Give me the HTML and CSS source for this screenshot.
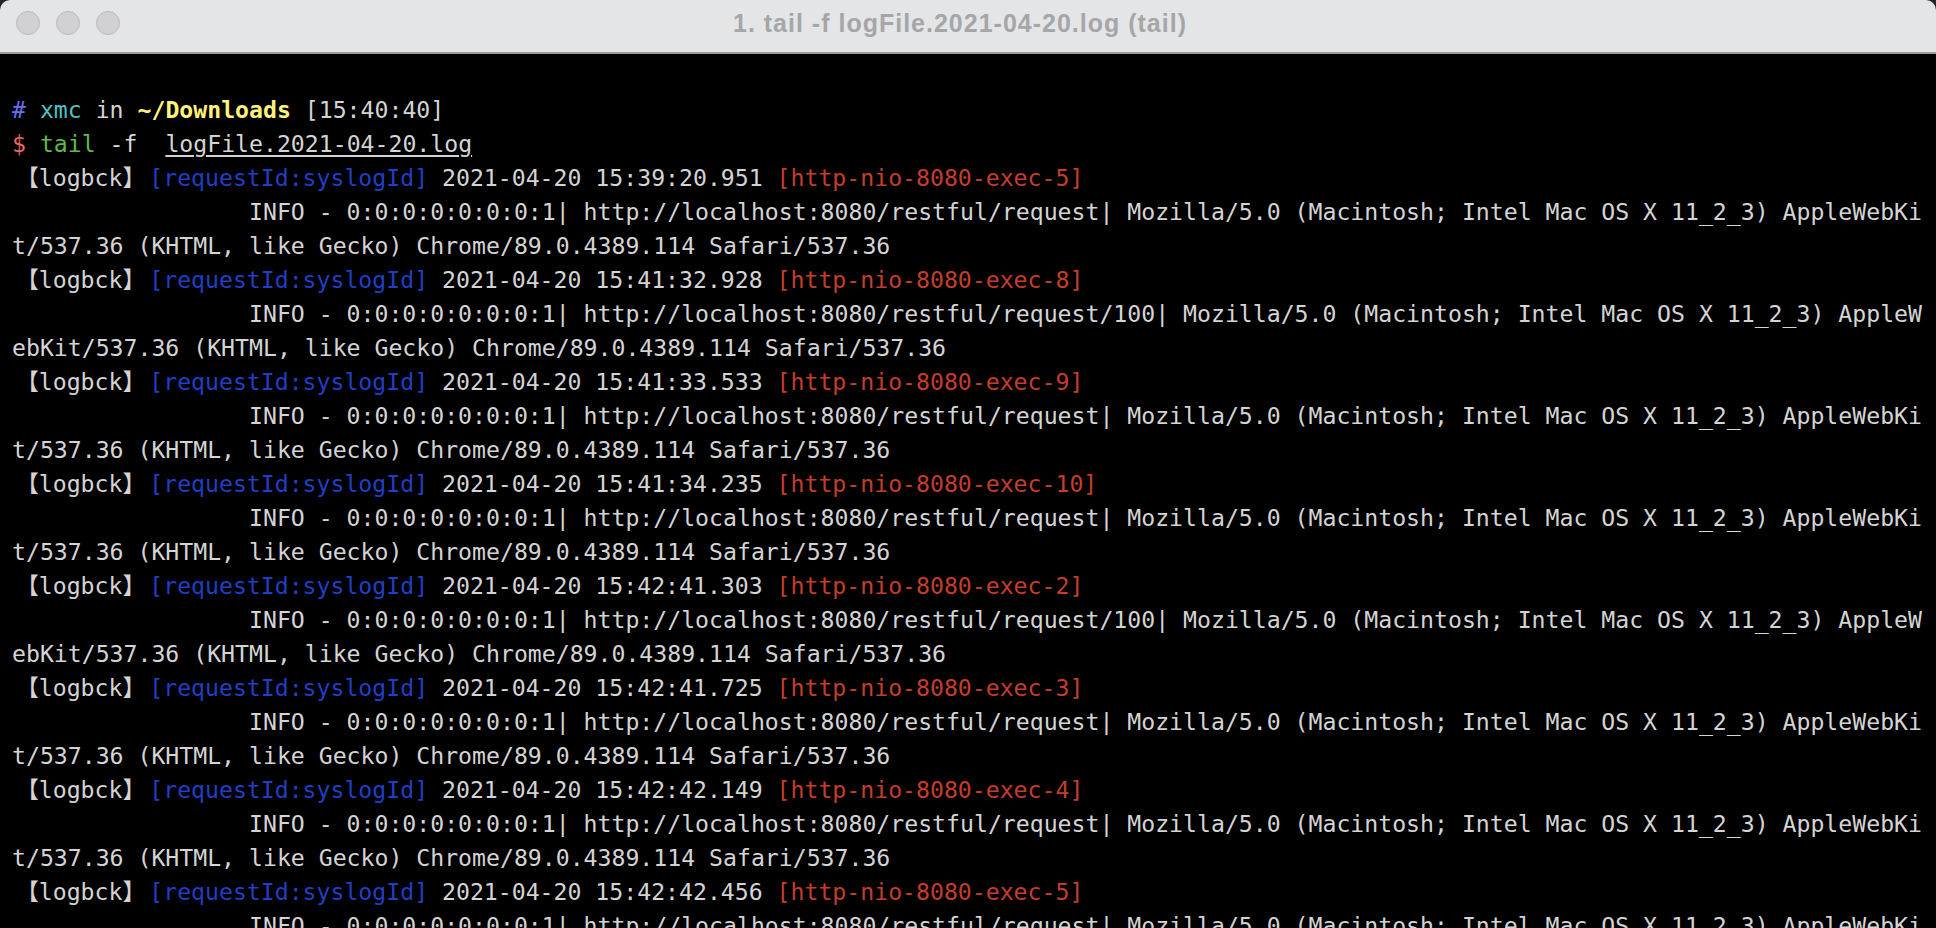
FILE: index.html
```html
<!DOCTYPE html>
<html lang="en">
<head>
<meta charset="utf-8">
<title>1. tail -f logFile.2021-04-20.log (tail)</title>
<link rel="stylesheet" href="styles.css">
</head>
<body>
<div class="window">
  <header class="titlebar">
    <div class="lights">
      <span class="light"></span>
      <span class="light"></span>
      <span class="light"></span>
    </div>
    <div class="title">1. tail -f logFile.2021-04-20.log (tail)</div>
    <div class="spacer"></div>
  </header>
  <main class="term">
    <div class="ln"> </div>
    <div class="ln"><span class="c-hash">#</span> <span class="c-user">xmc</span> in <span class="c-dir">~/Downloads</span> [15:40:40]</div>
    <div class="ln"><span class="c-dollar">$</span> <span class="c-cmd">tail</span> -f  <span class="c-file">logFile.2021-04-20.log</span></div>

    <div class="ln"> <span class="lb-open">【</span>logbck<span class="lb-close">】</span> <span class="c-req">[requestId:syslogId]</span> 2021-04-20 15:39:20.951 <span class="c-thr">[http-nio-8080-exec-5]</span></div>
    <div class="ln">                 INFO - 0:0:0:0:0:0:0:1| http://localhost:8080/restful/request| Mozilla/5.0 (Macintosh; Intel Mac OS X 11_2_3) AppleWebKi</div>
    <div class="ln">t/537.36 (KHTML, like Gecko) Chrome/89.0.4389.114 Safari/537.36</div>

    <div class="ln"> <span class="lb-open">【</span>logbck<span class="lb-close">】</span> <span class="c-req">[requestId:syslogId]</span> 2021-04-20 15:41:32.928 <span class="c-thr">[http-nio-8080-exec-8]</span></div>
    <div class="ln">                 INFO - 0:0:0:0:0:0:0:1| http://localhost:8080/restful/request/100| Mozilla/5.0 (Macintosh; Intel Mac OS X 11_2_3) AppleW</div>
    <div class="ln">ebKit/537.36 (KHTML, like Gecko) Chrome/89.0.4389.114 Safari/537.36</div>

    <div class="ln"> <span class="lb-open">【</span>logbck<span class="lb-close">】</span> <span class="c-req">[requestId:syslogId]</span> 2021-04-20 15:41:33.533 <span class="c-thr">[http-nio-8080-exec-9]</span></div>
    <div class="ln">                 INFO - 0:0:0:0:0:0:0:1| http://localhost:8080/restful/request| Mozilla/5.0 (Macintosh; Intel Mac OS X 11_2_3) AppleWebKi</div>
    <div class="ln">t/537.36 (KHTML, like Gecko) Chrome/89.0.4389.114 Safari/537.36</div>

    <div class="ln"> <span class="lb-open">【</span>logbck<span class="lb-close">】</span> <span class="c-req">[requestId:syslogId]</span> 2021-04-20 15:41:34.235 <span class="c-thr">[http-nio-8080-exec-10]</span></div>
    <div class="ln">                 INFO - 0:0:0:0:0:0:0:1| http://localhost:8080/restful/request| Mozilla/5.0 (Macintosh; Intel Mac OS X 11_2_3) AppleWebKi</div>
    <div class="ln">t/537.36 (KHTML, like Gecko) Chrome/89.0.4389.114 Safari/537.36</div>

    <div class="ln"> <span class="lb-open">【</span>logbck<span class="lb-close">】</span> <span class="c-req">[requestId:syslogId]</span> 2021-04-20 15:42:41.303 <span class="c-thr">[http-nio-8080-exec-2]</span></div>
    <div class="ln">                 INFO - 0:0:0:0:0:0:0:1| http://localhost:8080/restful/request/100| Mozilla/5.0 (Macintosh; Intel Mac OS X 11_2_3) AppleW</div>
    <div class="ln">ebKit/537.36 (KHTML, like Gecko) Chrome/89.0.4389.114 Safari/537.36</div>

    <div class="ln"> <span class="lb-open">【</span>logbck<span class="lb-close">】</span> <span class="c-req">[requestId:syslogId]</span> 2021-04-20 15:42:41.725 <span class="c-thr">[http-nio-8080-exec-3]</span></div>
    <div class="ln">                 INFO - 0:0:0:0:0:0:0:1| http://localhost:8080/restful/request| Mozilla/5.0 (Macintosh; Intel Mac OS X 11_2_3) AppleWebKi</div>
    <div class="ln">t/537.36 (KHTML, like Gecko) Chrome/89.0.4389.114 Safari/537.36</div>

    <div class="ln"> <span class="lb-open">【</span>logbck<span class="lb-close">】</span> <span class="c-req">[requestId:syslogId]</span> 2021-04-20 15:42:42.149 <span class="c-thr">[http-nio-8080-exec-4]</span></div>
    <div class="ln">                 INFO - 0:0:0:0:0:0:0:1| http://localhost:8080/restful/request| Mozilla/5.0 (Macintosh; Intel Mac OS X 11_2_3) AppleWebKi</div>
    <div class="ln">t/537.36 (KHTML, like Gecko) Chrome/89.0.4389.114 Safari/537.36</div>

    <div class="ln"> <span class="lb-open">【</span>logbck<span class="lb-close">】</span> <span class="c-req">[requestId:syslogId]</span> 2021-04-20 15:42:42.456 <span class="c-thr">[http-nio-8080-exec-5]</span></div>
    <div class="ln">                 INFO - 0:0:0:0:0:0:0:1| http://localhost:8080/restful/request| Mozilla/5.0 (Macintosh; Intel Mac OS X 11_2_3) AppleWebKi</div>
  </main>
</div>
</body>
</html>
```

FILE: styles.css
```css
html, body {
  margin: 0;
  padding: 0;
  height: 100%;
  overflow: hidden;
  background: #262626;
}

.window {
  height: 928px;
  display: flex;
  flex-direction: column;
  border-radius: 10px 10px 0 0;
  overflow: hidden;
  background: #000;
}

.titlebar {
  flex: 0 0 auto;
  height: 46px;
  padding-bottom: 6px;
  background: #e4e5e7;
  border-bottom: 2px solid #9c9c9c;
  display: grid;
  grid-template-columns: 1fr auto 1fr;
  align-items: center;
}

.lights {
  display: flex;
  gap: 16px;
  padding-left: 16px;
}

.light {
  width: 22px;
  height: 22px;
  border-radius: 50%;
  background: #d1d1d3;
  border: 1px solid #b9b9bb;
}

.title {
  font-family: "Liberation Sans", Arial, sans-serif;
  font-weight: bold;
  font-size: 25px;
  letter-spacing: 1px;
  color: #a6a6a8;
  white-space: nowrap;
  margin-right: 16px;
}

.term {
  flex: 1 1 auto;
  background: #000;
  padding: 5px 10px 0 12px;
  font-family: "DejaVu Sans Mono", monospace;
  font-size: 23.17px;
  line-height: 34px;
  color: #d4d4d4;
}

.ln {
  white-space: pre;
  height: 34px;
}

.c-hash { color: #6a6ff0; }
.c-user { color: #52c2c2; }
.c-dir { color: #fff27c; font-weight: bold; }
.c-dollar { color: #e8675e; }
.c-cmd { color: #5fb84c; }
.c-file { text-decoration: underline; text-underline-offset: 3px; }
.c-req { color: #1f3fc6; }
.c-thr { color: #c53d2a; }

.lb-open, .lb-close {
  display: inline-block;
  width: 1em;
  font-family: "Noto Sans CJK SC", sans-serif;
  font-size: 1em;
  line-height: 1;
  color: #d4d4d4;
}

.lb-open { margin-left: calc(1ch - 1em); }
.lb-close { margin-right: calc(1ch - 1em); }
```
